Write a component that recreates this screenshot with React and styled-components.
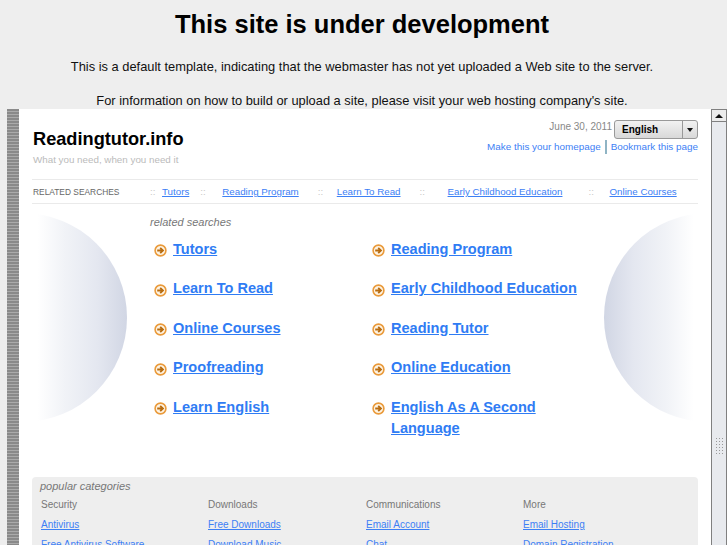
import React from "react";
import styled, { createGlobalStyle } from "styled-components";

const GlobalStyle = createGlobalStyle`
  html, body {
    margin: 0;
    padding: 0;
    width: 727px;
    height: 545px;
    overflow: hidden;
    background: #eeeeee;
    font-family: "Liberation Sans", Arial, sans-serif;
  }
`;

const Page = styled.div`
  width: 727px;
  height: 545px;
  display: flex;
  flex-direction: column;
  overflow: hidden;
`;

const Notice = styled.header`
  height: 109px;
  flex: none;
  text-align: center;
  color: #000;
  overflow: hidden;
  padding-right: 3px;
`;

const Heading = styled.h1`
  margin: 0;
  padding-top: 9px;
  font-size: 25.5px;
  line-height: 30px;
  font-weight: 700;
`;

const NoticeText = styled.p`
  margin: 0;
  font-size: 12.87px;
  line-height: 16px;
  color: #111;
  padding-top: ${(p) => p.$top}px;
`;

const FrameRow = styled.div`
  flex: 1;
  display: flex;
  padding-left: 7px;
  min-height: 0;
`;

const Rail = styled.div`
  width: 12px;
  flex: none;
  background: repeating-linear-gradient(#8a8a8a 0 2px, #ababab 2px 3px);
`;

const Frame = styled.main`
  flex: 1;
  background: #fff;
  padding: 0 13px;
  min-width: 0;
  overflow: hidden;
`;

const TopBar = styled.div`
  display: flex;
  justify-content: space-between;
  height: 70px;
`;

const Brand = styled.div`
  padding-top: 19px;
`;

const SiteName = styled.div`
  font-size: 18.2px;
  line-height: 22px;
  font-weight: 700;
  color: #000;
  padding-left: 1px;
`;

const Tagline = styled.div`
  font-size: 9.8px;
  line-height: 12px;
  margin-top: 4px;
  padding-left: 1px;
  color: #bbb;
`;

const TopRight = styled.div`
  padding-top: 11px;
  display: flex;
  flex-direction: column;
  align-items: flex-end;
`;

const DateRow = styled.div`
  display: flex;
  align-items: flex-start;
  gap: 2px;
  font-size: 10px;
  line-height: 13px;
  color: #888;
`;

const Select = styled.div`
  width: 84px;
  height: 19px;
  box-sizing: border-box;
  display: flex;
  border: 1px solid #999;
  border-radius: 3px;
  background: linear-gradient(#f2f2f2, #d8d8d8);
  font-size: 10px;
  font-weight: 700;
  color: #000;
`;

const SelectLabel = styled.div`
  flex: 1;
  padding-left: 7px;
  line-height: 18px;
  border-right: 1px solid #999;
`;

const SelectArrow = styled.div`
  width: 14px;
  display: flex;
  align-items: center;
  justify-content: center;
  &::after {
    content: "";
    border-left: 3.5px solid transparent;
    border-right: 3.5px solid transparent;
    border-top: 4px solid #111;
  }
`;

const UtilLinks = styled.div`
  display: flex;
  align-items: center;
  font-size: 9.9px;
  line-height: 14px;
  margin-top: 1px;
`;

const UtilLink = styled.a`
  color: #3d80f5;
  & + & {
    margin-left: 4px;
    padding-left: 4px;
    border-left: 2px solid #8fb4c4;
  }
`;

const SearchBar = styled.nav`
  height: 23px;
  border-top: 1px solid #eaeaea;
  border-bottom: 1px solid #eaeaea;
  display: flex;
  align-items: center;
`;

const BarLabel = styled.div`
  width: 118px;
  flex: none;
  font-size: 8.4px;
  color: #666;
  padding-left: 1px;
  box-sizing: border-box;
`;

const BarItem = styled.div`
  display: flex;
  align-items: center;
  margin-right: ${(p) => p.$gap}px;
  white-space: nowrap;
  font-size: 9.75px;
  &::before {
    content: "::";
    color: #c8c8c8;
    margin-right: ${(p) => p.$dots}px;
  }
`;

const BarLink = styled.a`
  color: #3d80f5;
  text-decoration: underline;
`;

const Showcase = styled.section`
  position: relative;
  height: 273px;
`;

const Orb = styled.div`
  position: absolute;
  top: 9px;
  width: 209px;
  height: 209px;
  border-radius: 50%;
  ${(p) => (p.$side === "left" ? "left: -114px;" : "right: -115px;")}
  background: linear-gradient(
    ${(p) => (p.$side === "left" ? "90deg" : "270deg")},
    #fff 57%,
    #f1f3f7 70%,
    #e4e7f0 86%,
    #d1d6e4 100%
  );
`;

const ResultsWrap = styled.div`
  position: relative;
  padding: 12px 0 0 118px;
`;

const ResultsTitle = styled.div`
  font-size: 11px;
  line-height: 13px;
  font-style: italic;
  color: #777;
  margin-bottom: 9.5px;
`;

const ResultsGrid = styled.div`
  display: grid;
  grid-template-columns: 218px 218px;
`;

const Result = styled.div`
  display: flex;
  min-height: 39.5px;
  padding-left: 4px;
`;

const ArrowBox = styled.svg`
  width: 13px;
  height: 13px;
  flex: none;
  margin: 5.5px 6px 0 0;
`;

const ResultLink = styled.a`
  font-size: 14.55px;
  line-height: 21px;
  font-weight: 700;
  color: #2f7cf4;
  text-decoration: underline;
`;

const Categories = styled.section`
  background: #eeeeee;
  border-radius: 4px 4px 0 0;
  height: 80px;
  padding: 2px 8px 0;
`;

const CategoriesTitle = styled.div`
  font-size: 11px;
  line-height: 14px;
  font-style: italic;
  color: #777;
`;

const CategoryGrid = styled.div`
  display: grid;
  grid-template-columns: 167px 158px 157px 1fr;
  margin-top: 5px;
  padding-left: 1px;
`;

const CategoryColumn = styled.div`
  display: flex;
  flex-direction: column;
  gap: 6px;
  font-size: 10px;
  line-height: 14px;
`;

const CategoryName = styled.div`
  color: #777;
`;

const CategoryLink = styled.a`
  color: #3d80f5;
  text-decoration: underline;
`;

const Scrollbar = styled.div`
  width: 16px;
  flex: none;
  position: relative;
  background: #e8eaee;
  border-left: 1px solid #808080;
  border-right: 1px solid #808080;
  box-sizing: border-box;
`;

const ScrollButton = styled.div`
  height: 11px;
  background: #ececec;
  border-bottom: 1px solid #808080;
  border-top: 1px solid #808080;
  display: flex;
  align-items: center;
  justify-content: center;
  &::after {
    content: "";
    border-left: 4px solid transparent;
    border-right: 4px solid transparent;
    border-bottom: 4px solid #111;
  }
`;

const Grip = styled.div`
  position: absolute;
  top: 328px;
  left: 3px;
  width: 9px;
  height: 18px;
  background-image: radial-gradient(#999 0.6px, transparent 0.8px);
  background-size: 3px 3px;
`;

const barItems = [
  { label: "Tutors", dots: 6.6, gap: 11 },
  { label: "Reading Program", dots: 16.6, gap: 19 },
  { label: "Learn To Read", dots: 13.6, gap: 19 },
  { label: "Early Childhood Education", dots: 22.6, gap: 26 },
  { label: "Online Courses", dots: 15.6, gap: 0 },
];

const results = [
  "Tutors",
  "Reading Program",
  "Learn To Read",
  "Early Childhood Education",
  "Online Courses",
  "Reading Tutor",
  "Proofreading",
  "Online Education",
  "Learn English",
  "English As A Second Language",
];

const categories = [
  { name: "Security", links: ["Antivirus", "Free Antivirus Software"] },
  { name: "Downloads", links: ["Free Downloads", "Download Music"] },
  { name: "Communications", links: ["Email Account", "Chat"] },
  { name: "More", links: ["Email Hosting", "Domain Registration"] },
];

const ArrowIcon = () => (
  <ArrowBox viewBox="0 0 13 13">
    <circle cx="6.5" cy="6.5" r="5.4" fill="#fdf3e3" stroke="#ea9a3a" strokeWidth="1.6" />
    <path d="M3.2 6.5h5.4M6.2 3.8l2.8 2.7-2.8 2.7" fill="none" stroke="#b86c10" strokeWidth="1.8" />
  </ArrowBox>
);

const App = () => {
  return (
    <Page>
      <GlobalStyle />
      <Notice>
        <Heading>This site is under development</Heading>
        <NoticeText $top={20}>
          This is a default template, indicating that the webmaster has not yet uploaded a Web site to the server.
        </NoticeText>
        <NoticeText $top={18}>
          For information on how to build or upload a site, please visit your web hosting company's site.
        </NoticeText>
      </Notice>
      <FrameRow>
        <Rail />
        <Frame>
          <TopBar>
            <Brand>
              <SiteName>Readingtutor.info</SiteName>
              <Tagline>What you need, when you need it</Tagline>
            </Brand>
            <TopRight>
              <DateRow>
                June 30, 2011
                <Select>
                  <SelectLabel>English</SelectLabel>
                  <SelectArrow />
                </Select>
              </DateRow>
              <UtilLinks>
                <UtilLink>Make this your homepage</UtilLink>
                <UtilLink>Bookmark this page</UtilLink>
              </UtilLinks>
            </TopRight>
          </TopBar>
          <SearchBar>
            <BarLabel>RELATED SEARCHES</BarLabel>
            {barItems.map((item) => (
              <BarItem key={item.label} $dots={item.dots} $gap={item.gap}>
                <BarLink>{item.label}</BarLink>
              </BarItem>
            ))}
          </SearchBar>
          <Showcase>
            <Orb $side="left" />
            <Orb $side="right" />
            <ResultsWrap>
              <ResultsTitle>related searches</ResultsTitle>
              <ResultsGrid>
                {results.map((label) => (
                  <Result key={label}>
                    <ArrowIcon />
                    <ResultLink>{label}</ResultLink>
                  </Result>
                ))}
              </ResultsGrid>
            </ResultsWrap>
          </Showcase>
          <Categories>
            <CategoriesTitle>popular categories</CategoriesTitle>
            <CategoryGrid>
              {categories.map((cat) => (
                <CategoryColumn key={cat.name}>
                  <CategoryName>{cat.name}</CategoryName>
                  {cat.links.map((link) => (
                    <CategoryLink key={link}>{link}</CategoryLink>
                  ))}
                </CategoryColumn>
              ))}
            </CategoryGrid>
          </Categories>
        </Frame>
        <Scrollbar>
          <ScrollButton />
          <Grip />
        </Scrollbar>
      </FrameRow>
    </Page>
  );
};

export default App;
